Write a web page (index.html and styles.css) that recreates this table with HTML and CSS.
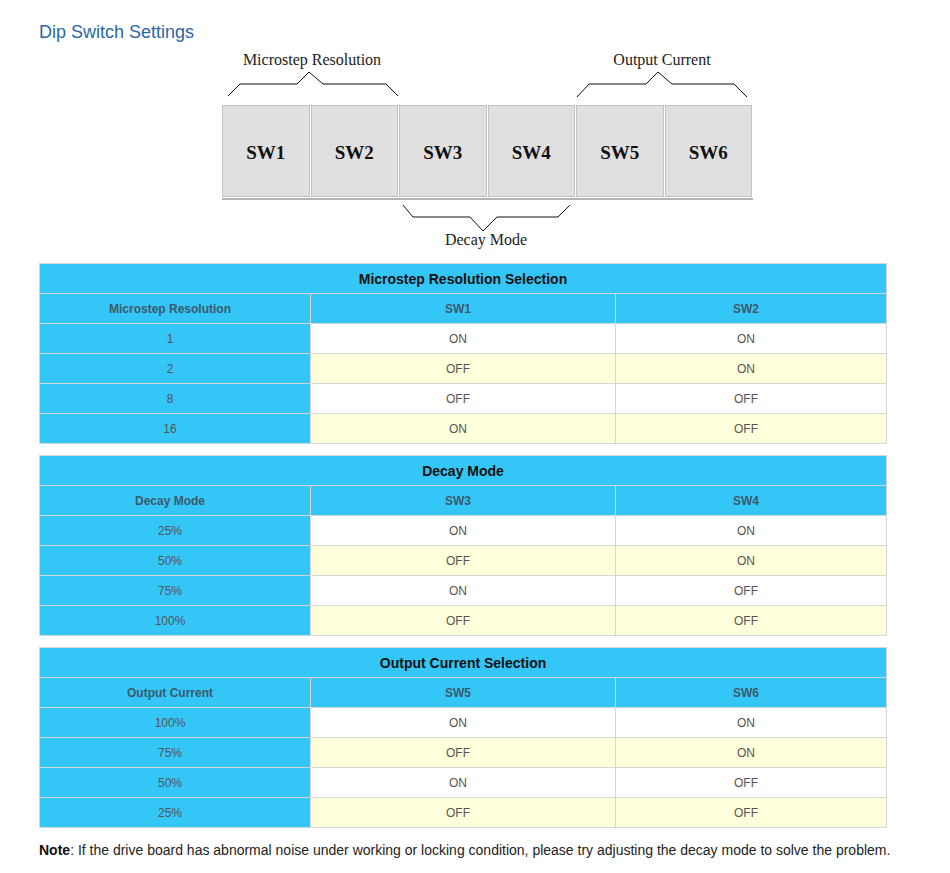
FILE: index.html
```html
<!DOCTYPE html>
<html lang="en">
  <head>
    <meta charset="UTF-8" />
    <meta name="viewport" content="width=device-width, initial-scale=1.0" />
    <title>Dip Switch Settings</title>
    <link rel="stylesheet" href="styles.css">
  </head>
  <body>
    <div class="page">
      <h1 class="title">Dip Switch Settings</h1>

      <div class="diagram">
        <div class="labels-top">
          <span class="label span-a">Microstep Resolution</span>
          <span class="label span-c">Output Current</span>
        </div>
        <svg class="braces" width="530" height="28" viewBox="0 0 530 28">
          <polyline points="6,26 18,14 75,14 87,2 101,14 164,14 176,26" />
          <polyline points="355,27 367,14 424,14 436,2 450,14 512,14 525,27" />
        </svg>
        <div class="switches">
          <div class="switch">SW1</div>
          <div class="switch">SW2</div>
          <div class="switch">SW3</div>
          <div class="switch">SW4</div>
          <div class="switch">SW5</div>
          <div class="switch">SW6</div>
        </div>
        <svg class="braces" width="530" height="32" viewBox="0 0 530 32">
          <polyline points="181,4 191,16 248,16 261,30 275,16 336,16 348,4" />
        </svg>
        <div class="labels-bottom">
          <span class="label span-b">Decay Mode</span>
        </div>
      </div>

      <table class="dip-table">
        <colgroup>
          <col class="col-side" />
          <col class="col-mid" />
          <col class="col-side" />
        </colgroup>
        <thead>
          <tr><th colspan="3" class="table-title">Microstep Resolution Selection</th></tr>
          <tr>
            <th>Microstep Resolution</th>
            <th>SW1</th>
            <th>SW2</th>
          </tr>
        </thead>
        <tbody>
          <tr><td class="key">1</td><td>ON</td><td>ON</td></tr>
          <tr><td class="key">2</td><td>OFF</td><td>ON</td></tr>
          <tr><td class="key">8</td><td>OFF</td><td>OFF</td></tr>
          <tr><td class="key">16</td><td>ON</td><td>OFF</td></tr>
        </tbody>
      </table>

      <table class="dip-table">
        <colgroup>
          <col class="col-side" />
          <col class="col-mid" />
          <col class="col-side" />
        </colgroup>
        <thead>
          <tr><th colspan="3" class="table-title">Decay Mode</th></tr>
          <tr>
            <th>Decay Mode</th>
            <th>SW3</th>
            <th>SW4</th>
          </tr>
        </thead>
        <tbody>
          <tr><td class="key">25%</td><td>ON</td><td>ON</td></tr>
          <tr><td class="key">50%</td><td>OFF</td><td>ON</td></tr>
          <tr><td class="key">75%</td><td>ON</td><td>OFF</td></tr>
          <tr><td class="key">100%</td><td>OFF</td><td>OFF</td></tr>
        </tbody>
      </table>

      <table class="dip-table">
        <colgroup>
          <col class="col-side" />
          <col class="col-mid" />
          <col class="col-side" />
        </colgroup>
        <thead>
          <tr><th colspan="3" class="table-title">Output Current Selection</th></tr>
          <tr>
            <th>Output Current</th>
            <th>SW5</th>
            <th>SW6</th>
          </tr>
        </thead>
        <tbody>
          <tr><td class="key">100%</td><td>ON</td><td>ON</td></tr>
          <tr><td class="key">75%</td><td>OFF</td><td>ON</td></tr>
          <tr><td class="key">50%</td><td>ON</td><td>OFF</td></tr>
          <tr><td class="key">25%</td><td>OFF</td><td>OFF</td></tr>
        </tbody>
      </table>

      <p class="note"><strong>Note</strong>: If the drive board has abnormal noise under working or locking condition, please try adjusting the decay mode to solve the problem.</p>
    </div>
  </body>
</html>
```

FILE: styles.css
```css
body {
  margin: 0;
  padding: 0;
  background-color: #ffffff;
  font-family: "Liberation Sans", Arial, sans-serif;
  color: #555;
}

.page {
  padding: 22px 39px 0;
}

.title {
  margin: 0;
  font-size: 18px;
  line-height: 21px;
  font-weight: normal;
  color: #2a67a8;
}

/* switch diagram */

.diagram {
  width: 531px;
  margin: 8px 0 0 183px;
  font-family: "Liberation Serif", "Times New Roman", serif;
  color: #222;
}

.labels-top,
.labels-bottom {
  display: grid;
  grid-template-columns: repeat(6, 88px);
  font-size: 16px;
  line-height: 18px;
}

.labels-bottom {
  line-height: 16px;
  margin-top: -1px;
}

.label {
  text-align: center;
}

.span-a {
  grid-column: 1 / 3;
  padding-left: 4px;
}

.span-b {
  grid-column: 3 / 5;
}

.span-c {
  grid-column: 5 / 7;
}

.braces {
  display: block;
  margin-top: 1px;
}

.braces polyline {
  fill: none;
  stroke: #111;
  stroke-width: 1;
}

.switches {
  display: flex;
  gap: 1px;
  margin-top: 7px;
  padding-bottom: 1px;
  border-bottom: 2px solid #b4b4b4;
}

.switch {
  box-sizing: border-box;
  width: 87.5px;
  height: 92px;
  border: 1px solid #c2c2c2;
  background-color: #e0e0e0;
  display: flex;
  justify-content: center;
  align-items: center;
  font-size: 19px;
  font-weight: bold;
  color: #111;
  padding-top: 3px;
}

/* tables */

.dip-table {
  width: 847px;
  border-collapse: collapse;
  border: 1px solid #cfcfcf;
  table-layout: fixed;
  margin-bottom: 11px;
}

.dip-table:first-of-type {
  margin-top: 15px;
}

.col-side {
  width: 271px;
}

.col-mid {
  width: 305px;
}

.dip-table th,
.dip-table td {
  box-sizing: border-box;
  height: 30px;
  padding: 0 10px 0 0;
  border: 1px solid #d6d6d6;
  text-align: center;
  font-size: 12px;
}

.dip-table th {
  background-color: #34c6f7;
  color: #3c5a6a;
  font-weight: bold;
}

.dip-table th.table-title {
  font-size: 14px;
  color: #111;
  padding: 0;
}

.dip-table td {
  color: #555;
  background-color: #ffffff;
}

.dip-table tbody tr:nth-child(even) td {
  background-color: #ffffdc;
}

.dip-table td.key,
.dip-table tbody tr:nth-child(even) td.key {
  background-color: #34c6f7;
}

.note {
  margin: 14px 0 0;
  font-size: 14px;
  line-height: 16px;
  color: #222;
}

.note strong {
  color: #111;
}
```
